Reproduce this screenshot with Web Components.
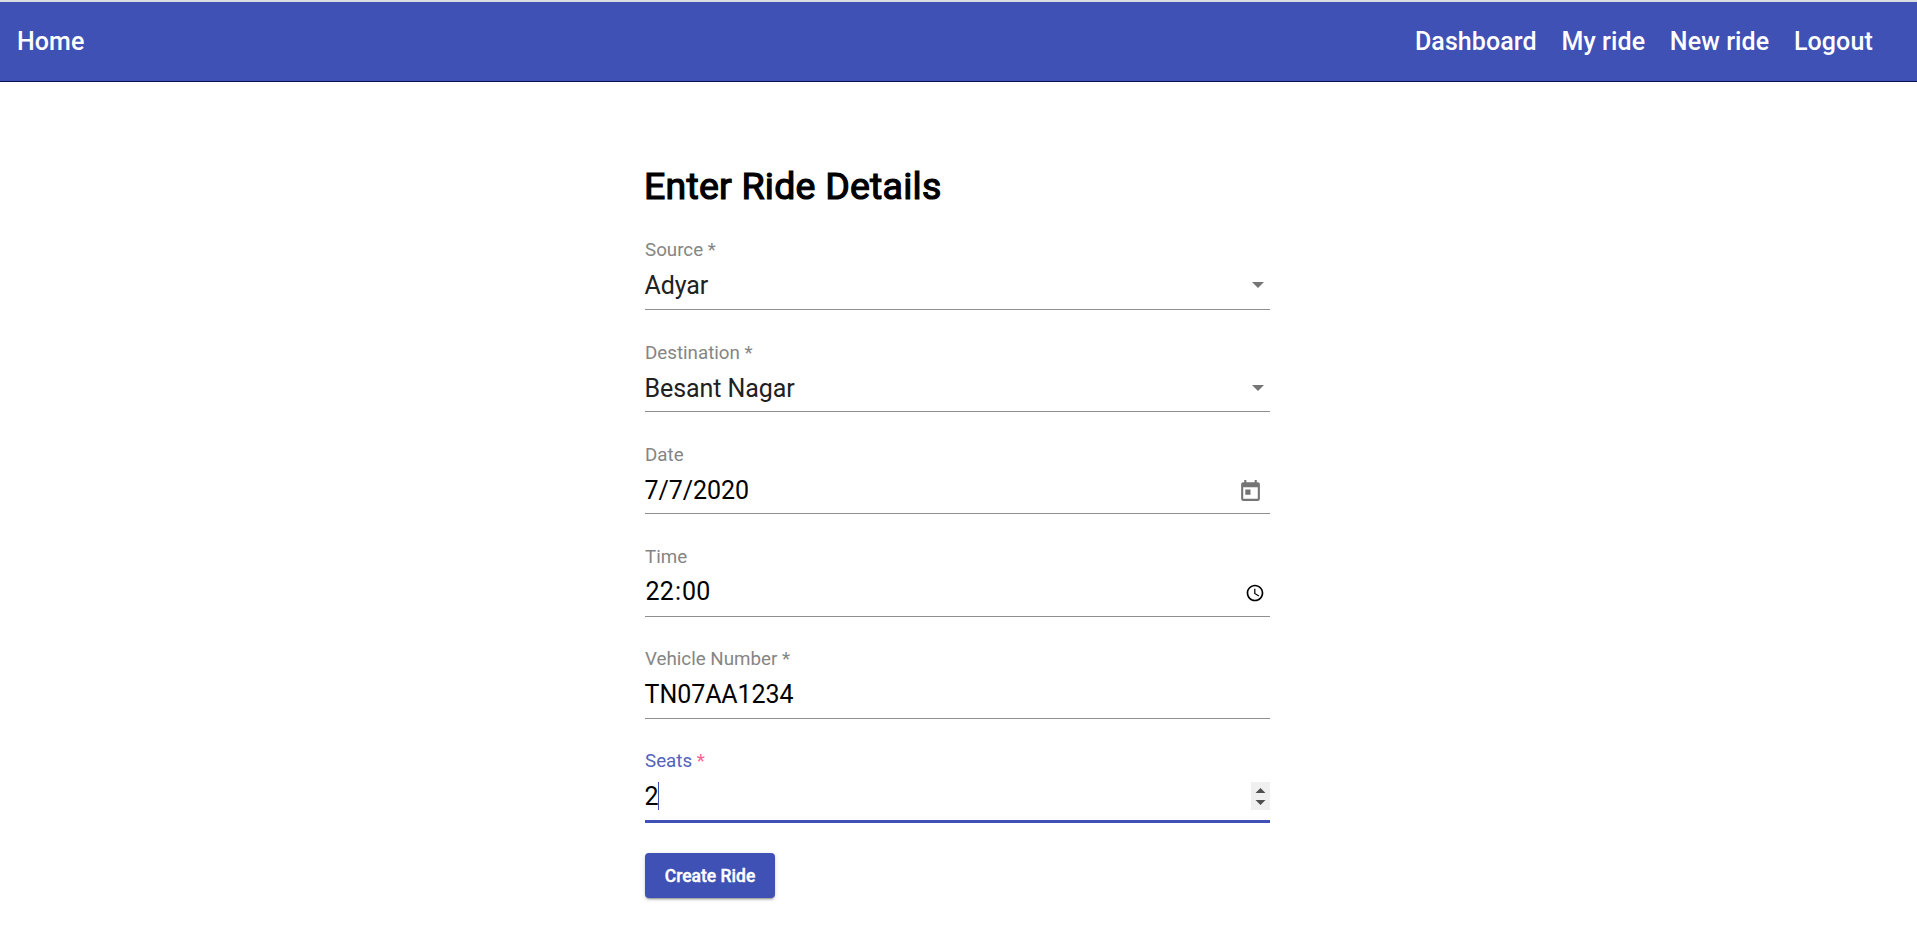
<!DOCTYPE html>
<html lang="en">
<head>
<meta charset="utf-8">
<title>New ride</title>
<style>
html,body{margin:0;background:#fff}
body{font-family:Roboto,"Liberation Sans",sans-serif;color:#000;height:943px;overflow:hidden}
</style>
</head>
<body>
<ride-app></ride-app>
<script>
const define = (name, html) => customElements.define(name, class extends HTMLElement {
  constructor() {
    super();
    const t = document.createElement('template');
    t.innerHTML = html;
    this.attachShadow({mode: 'open'}).append(t.content.cloneNode(true));
  }
});

define('nav-link', `<style>
:host{display:block;font-size:25px;font-weight:500;line-height:30px;color:#fff;letter-spacing:.1px;white-space:nowrap}
</style><slot></slot>`);

define('nav-bar', `<style>
:host{display:flex;justify-content:space-between;align-items:flex-start;box-sizing:border-box;height:82px;padding:25px 44.2px 0 17px;background:#3f51b5;border-top:2px solid #dadce0;border-bottom:1px solid #0a1050}
nav{display:flex;gap:24.7px}
</style><slot name="brand"></slot><nav><slot></slot></nav>`);

define('form-title', `<style>
:host{display:block;font-size:37.5px;line-height:50px;letter-spacing:.22px;-webkit-text-stroke:1.2px #000;margin-left:-1px}
</style><slot></slot>`);

define('form-field', `<style>
:host{display:block;height:102.2px}
.label{height:22px;line-height:22px;font-size:18.75px;color:#858585;margin-bottom:9px}
.row{display:flex;justify-content:space-between;align-items:flex-start;height:38.6px;border-bottom:1px solid #8f8f8f}
.value{font-size:25px;line-height:31px;letter-spacing:var(--track,-.08px);display:flex;margin-left:-.4px}
:host([select]) .value{color:#212121}
:host([focused]) .label{color:#5362bd}
:host([focused]) .row{border-bottom:3px solid #3f51b5}
</style><div class="label"><slot name="label"></slot></div><div class="row"><div class="value"><slot></slot></div><slot name="suffix"></slot></div>`);

define('required-mark', `<style>:host{color:#ff5c92}</style>*`);

define('text-caret', `<style>:host{display:block;width:1px;height:28px;margin:1px 0 0 -.6px;background:#3f51b5}</style>`);

define('select-arrow', `<style>:host{display:block;margin:12px 6px 0 0}svg{display:block}</style>
<svg width="12" height="6" viewBox="0 0 12 6"><path d="M0 0h12L6 6z" fill="#757575"/></svg>`);

define('calendar-icon', `<style>:host{display:block;margin:4.7px 7px 0 0}svg{display:block}</style>
<svg width="25" height="25" viewBox="0 0 24 24" fill="#757575"><path d="M19 3h-1V1h-2v2H8V1H6v2H5c-1.11 0-1.99.9-1.99 2L3 19c0 1.1.89 2 2 2h14c1.1 0 2-.9 2-2V5c0-1.1-.9-2-2-2zm0 16H5V8h14v11zM7 10h5v5H7z"/></svg>`);

define('clock-icon', `<style>:host{display:block;margin:6px 5px 0 0}svg{display:block}</style>
<svg width="20" height="20" viewBox="0 0 24 24"><path d="M11.99 2C6.47 2 2 6.48 2 12s4.47 10 9.99 10C17.52 22 22 17.52 22 12S17.52 2 11.99 2zM12 20c-4.42 0-8-3.58-8-8s3.58-8 8-8 8 3.58 8 8-3.58 8-8 8zm.5-13H11v6l5.25 3.15.75-1.23-4.5-2.67z"/></svg>`);

define('number-spinner', `<style>:host{display:block;margin-top:.6px;background:#f0f0f0}svg{display:block}</style>
<svg width="19" height="28" viewBox="0 0 19 28" fill="#505050"><path d="M9.5 6L14.5 11h-10zM4.5 18h10L9.5 23z"/></svg>`);

define('raised-button', `<style>
:host{display:block}
button{display:block;box-sizing:border-box;width:130px;height:45px;margin:0;padding:1px 0 0;border:0;border-radius:4px;background:#3f51b5;color:#fff;font:500 17.5px/44px Roboto,sans-serif;-webkit-text-stroke:.4px #fff;box-shadow:0 3px 1px -2px rgba(0,0,0,.2),0 2px 2px 0 rgba(0,0,0,.14),0 1px 5px 0 rgba(0,0,0,.12)}
</style><button type="button"><slot></slot></button>`);

define('ride-form', `<style>
:host{display:flex;flex-direction:column;width:625px;margin:79px 0 0 645px}
form-title{height:78.4px}
raised-button{margin-top:.4px}
</style>
<form-title>Enter Ride Details</form-title>
<form-field select style="--track:-.15px"><span slot="label">Source *</span>Adyar<select-arrow slot="suffix"></select-arrow></form-field>
<form-field select><span slot="label">Destination *</span>Besant Nagar<select-arrow slot="suffix"></select-arrow></form-field>
<form-field><span slot="label">Date</span>7/7/2020<calendar-icon slot="suffix"></calendar-icon></form-field>
<form-field style="--track:.1px"><span slot="label">Time</span><span style="margin:-.8px 0 0 1px">22<span style="margin:0 1px">:</span>00</span><clock-icon slot="suffix"></clock-icon></form-field>
<form-field><span slot="label">Vehicle Number *</span>TN07AA1234</form-field>
<form-field focused><span slot="label">Seats <required-mark></required-mark></span>2<text-caret></text-caret><number-spinner slot="suffix"></number-spinner></form-field>
<raised-button>Create Ride</raised-button>`);

define('ride-app', `<style>:host{display:block}</style>
<nav-bar><nav-link slot="brand">Home</nav-link><nav-link>Dashboard</nav-link><nav-link>My ride</nav-link><nav-link>New ride</nav-link><nav-link>Logout</nav-link></nav-bar>
<ride-form></ride-form>`);
</script>
</body>
</html>
